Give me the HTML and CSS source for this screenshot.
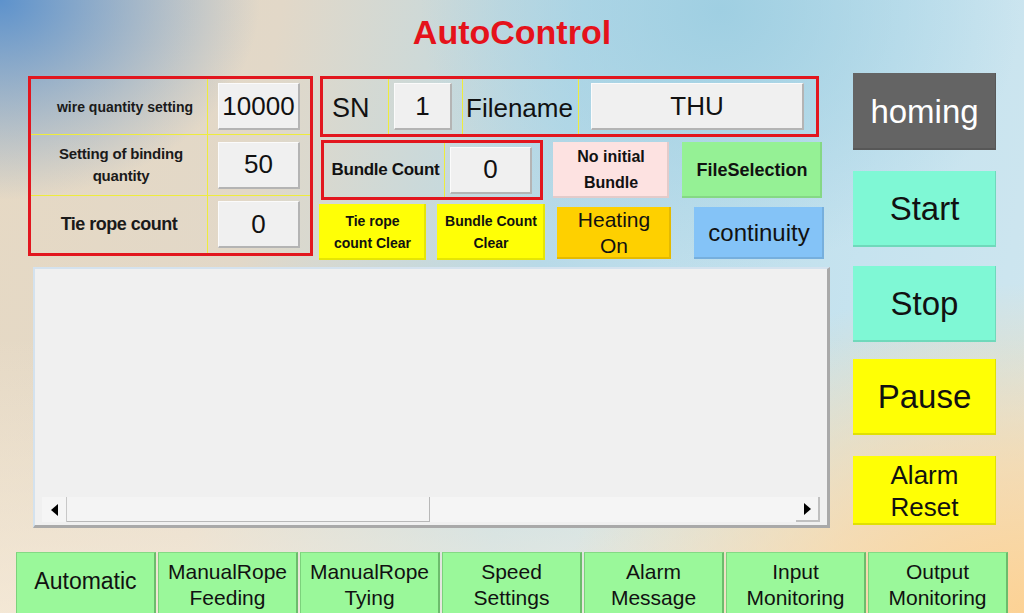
FILE: index.html
```html
<!DOCTYPE html>
<html lang="en">
<head>
<meta charset="utf-8">
<title>AutoControl</title>
<link rel="stylesheet" href="styles.css">
</head>
<body>
<div class="screen">
  <h1 class="title">AutoControl</h1>
  <div class="main">
    <div class="work">
      <div class="controls">
        <div class="params">
          <div class="prow r1">
            <div class="plabel l1">wire quantity setting</div>
            <div class="pval"><div class="input w82">10000</div></div>
          </div>
          <div class="prow r2">
            <div class="plabel l2">Setting of binding<br>quantity</div>
            <div class="pval"><div class="input w82">50</div></div>
          </div>
          <div class="prow r3">
            <div class="plabel l3">Tie rope count</div>
            <div class="pval"><div class="input w82">0</div></div>
          </div>
        </div>
        <div class="center">
          <div class="snbox">
            <div class="cell sn">SN</div>
            <div class="cell snval"><div class="input w58">1</div></div>
            <div class="cell fname">Filename</div>
            <div class="cell fval"><div class="input w213">THU</div></div>
          </div>
          <div class="row2">
            <div class="bundlebox">
              <div class="cell blabel">Bundle Count</div>
              <div class="cell bval"><div class="input w82">0</div></div>
            </div>
            <div class="btn pink">No initial<br>Bundle</div>
            <div class="btn green fsel">FileSelection</div>
          </div>
          <div class="row3">
            <div class="btn yellow small tie">Tie rope<br>count Clear</div>
            <div class="btn yellow small bclear">Bundle Count<br>Clear</div>
            <div class="btn gold heat">Heating<br>On</div>
            <div class="btn blue cont">continuity</div>
          </div>
        </div>
      </div>
      <div class="list">
        <div class="list-body"></div>
        <div class="hscroll">
          <div class="sbtn"><span class="tri-left"></span></div>
          <div class="thumb"></div>
          <div class="track"></div>
          <div class="sbtn right"><span class="tri-right"></span></div>
        </div>
      </div>
    </div>
    <div class="side">
      <div class="sidebtn homing">homing</div>
      <div class="sidebtn aqua start">Start</div>
      <div class="sidebtn aqua stop">Stop</div>
      <div class="sidebtn yel pause">Pause</div>
      <div class="sidebtn yel alarm">Alarm<br>Reset</div>
    </div>
  </div>
  <nav class="tabs">
    <div class="tab auto">Automatic</div>
    <div class="tab">ManualRope<br>Feeding</div>
    <div class="tab">ManualRope<br>Tying</div>
    <div class="tab">Speed<br>Settings</div>
    <div class="tab">Alarm<br>Message</div>
    <div class="tab">Input<br>Monitoring</div>
    <div class="tab">Output<br>Monitoring</div>
  </nav>
</div>
</body>
</html>
```
FILE: styles.css
```css
* { box-sizing: border-box; }
html, body { margin: 0; padding: 0; }
body {
  width: 1024px;
  height: 613px;
  overflow: hidden;
  font-family: "Liberation Sans", Arial, sans-serif;
  color: #111;
}
.screen {
  width: 1024px;
  height: 613px;
  display: flex;
  flex-direction: column;
  overflow: hidden;
  background:
    radial-gradient(ellipse 260px 200px at 0% 0%, #5d92cc 0%, rgba(93,146,204,0.6) 40%, rgba(93,146,204,0) 100%),
    radial-gradient(ellipse 460px 330px at 100% 100%, #fcd295 0%, rgba(252,214,160,0.7) 45%, rgba(252,214,160,0) 100%),
    radial-gradient(ellipse 300px 260px at 720px 10px, #9fcfe2 0%, rgba(159,207,226,0) 100%),
    linear-gradient(180deg, rgba(255,255,255,0) 55%, rgba(250,238,220,0.7) 100%),
    linear-gradient(100deg, #e6d9c4 0%, #e2d8c8 25%, #b8dae8 52%, #c6e3ef 80%, #cfe6ef 100%);
}
.title {
  margin: 0;
  height: 73px;
  padding-top: 15px;
  text-align: center;
  font-size: 34px;
  line-height: 34px;
  font-weight: bold;
  color: #e5121b;
}
.main {
  display: flex;
  height: 479px;
}
.work {
  width: 830px;
  padding-left: 28px;
  padding-top: 3px;
  display: flex;
  flex-direction: column;
}
.controls {
  display: flex;
  align-items: flex-start;
  height: 191px;
}

/* parameter table */
.params {
  width: 285px;
  height: 180px;
  border: 3px solid #e2161e;
  display: flex;
  flex-direction: column;
}
.prow {
  display: flex;
  border-bottom: 1px solid #eeec3c;
}
.prow.r1 { height: 56px; }
.prow.r2 { height: 61px; }
.prow.r3 { flex: 1; border-bottom: none; }
.plabel {
  width: 177px;
  border-right: 1px solid #eeec3c;
  display: flex;
  align-items: center;
  justify-content: center;
  text-align: center;
  font-weight: bold;
  color: #1a1a1a;
}
.l1 { font-size: 14px; padding-left: 12px; }
.l2 { font-size: 15px; line-height: 22px; letter-spacing: -0.2px; padding-left: 4px; }
.l3 { font-size: 18px; letter-spacing: -0.5px; }
.pval {
  flex: 1;
  display: flex;
  align-items: center;
  padding-left: 10px;
}

.input {
  height: 47px;
  background: #f0f0f0;
  border-top: 1px solid #fbfbfb;
  border-left: 1px solid #fbfbfb;
  border-right: 2px solid #b4b4b4;
  border-bottom: 2px solid #b4b4b4;
  display: flex;
  align-items: center;
  justify-content: center;
  font-size: 26px;
  color: #111;
}
.w82 { width: 82px; }
.w58 { width: 58px; }
.w213 { width: 213px; }

/* center block */
.center {
  margin-left: 6px;
  width: 505px;
  display: flex;
  flex-direction: column;
}
.snbox {
  margin-left: 1px;
  width: 499px;
  height: 61px;
  border: 3px solid #e2161e;
  display: flex;
}
.cell {
  display: flex;
  align-items: center;
}
.sn {
  width: 66px;
  padding-left: 9px;
  padding-top: 4px;
  font-size: 27px;
  border-right: 1px solid #eeec3c;
}
.snval {
  width: 74px;
  padding-left: 5px;
  border-right: 1px solid #eeec3c;
}
.fname {
  width: 116px;
  padding-left: 3px;
  padding-top: 4px;
  font-size: 26px;
  border-right: 1px solid #eeec3c;
}
.fval {
  flex: 1;
  padding-left: 12px;
}
.row2 {
  margin-top: 3px;
  display: flex;
  align-items: flex-start;
  height: 61px;
}
.bundlebox {
  margin-left: 2px;
  width: 222px;
  height: 60px;
  border: 3px solid #e2161e;
  display: flex;
}
.blabel {
  width: 121px;
  justify-content: center;
  padding-left: 3px;
  font-size: 17px;
  font-weight: bold;
  letter-spacing: -0.3px;
  border-right: 1px solid #eeec3c;
}
.bval {
  flex: 1;
  padding-left: 5px;
}

.btn {
  display: flex;
  align-items: center;
  justify-content: center;
  text-align: center;
  box-shadow: inset -2px -2px 0 rgba(0,0,0,0.10);
  color: #111;
}
.pink {
  margin-left: 10px;
  margin-top: 2px;
  width: 116px;
  height: 56px;
  background: #fde2e1;
  font-size: 16px;
  line-height: 26px;
  font-weight: bold;
}
.green { background: #95f195; }
.fsel {
  margin-left: 13px;
  margin-top: 2px;
  width: 140px;
  height: 56px;
  font-size: 18px;
  font-weight: bold;
}
.row3 {
  margin-top: 3px;
  display: flex;
  align-items: flex-start;
}
.yellow { background: #ffff06; }
.small {
  height: 56px;
  font-size: 14px;
  line-height: 22px;
  font-weight: bold;
}
.tie { width: 107px; }
.bclear { margin-left: 11px; width: 108px; }
.gold {
  background: #fed000;
}
.heat {
  margin-left: 12px;
  margin-top: 3px;
  width: 114px;
  height: 52px;
  font-size: 21px;
  line-height: 26px;
}
.blue { background: #84c3f7; }
.cont {
  margin-left: 23px;
  margin-top: 3px;
  width: 130px;
  height: 52px;
  font-size: 24px;
}

/* list */
.list {
  margin-left: 5px;
  width: 797px;
  height: 261px;
  background: #f0f0f0;
  border-top: 2px solid #d4e2ee;
  border-left: 2px solid #d4e2ee;
  border-right: 3px solid #a9a9a9;
  border-bottom: 3px solid #a9a9a9;
  display: flex;
  flex-direction: column;
}
.list-body { flex: 1; }
.hscroll {
  height: 25px;
  margin: 0 7px 3px 7px;
  display: flex;
  background: #f5f5f5;
}
.sbtn {
  width: 25px;
  display: flex;
  align-items: center;
  justify-content: center;
  border-right: 1px solid #c8c8c8;
}
.sbtn.right {
  border-right: 2px solid #c0c0c0;
  border-bottom: 2px solid #c0c0c0;
  border-left: none;
  width: 24px;
}
.tri-left {
  width: 0; height: 0;
  border-top: 6px solid transparent;
  border-bottom: 6px solid transparent;
  border-right: 7px solid #000;
}
.tri-right {
  width: 0; height: 0;
  border-top: 6px solid transparent;
  border-bottom: 6px solid transparent;
  border-left: 7px solid #000;
}
.thumb {
  width: 363px;
  background: #f4f4f4;
  border-right: 1px solid #b8b8b8;
  border-bottom: 1px solid #b8b8b8;
}
.track { flex: 1; }

/* side buttons */
.side {
  margin-left: 23px;
  width: 143px;
  display: flex;
  flex-direction: column;
}
.sidebtn {
  display: flex;
  align-items: center;
  justify-content: center;
  text-align: center;
  height: 76px;
  font-size: 33px;
  color: #111;
  box-shadow: inset -1px -2px 0 rgba(0,0,0,0.12);
}
.homing {
  height: 77px;
  background: #646464;
  color: #fff;
  font-size: 33px;
}
.aqua { background: #7ff8d5; }
.yel { background: #ffff05; }
.start { margin-top: 21px; font-size: 33px; }
.stop { margin-top: 19px; }
.pause { margin-top: 17px; }
.alarm {
  margin-top: 21px;
  height: 69px;
  font-size: 26px;
  line-height: 32px;
}

/* tabs */
.tabs {
  display: flex;
  gap: 2px;
  padding-left: 16px;
  height: 61px;
}
.tab {
  width: 140px;
  height: 64px;
  background: #9af89a;
  border-left: 1px solid #7cd27c;
  border-top: 1px solid #84da84;
  border-right: 2px solid #6cbc6c;
  display: flex;
  align-items: center;
  justify-content: center;
  text-align: center;
  font-size: 21px;
  line-height: 26px;
  color: #111;
}
.tab.auto { font-size: 23px; padding-bottom: 8px; }
```
